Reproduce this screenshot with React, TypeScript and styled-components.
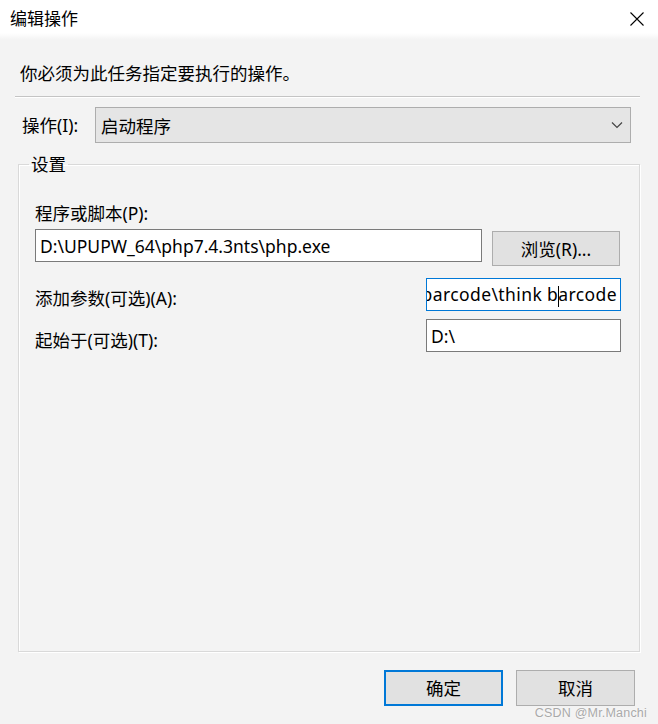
import React from "react";
import styled, { createGlobalStyle } from "styled-components";

const GlobalStyle = createGlobalStyle`
  html, body { margin: 0; padding: 0; background: #f3f3f3; }
  body { font-family: "Noto Sans", "Noto Sans CJK SC", sans-serif; color: #000; }
  * { box-sizing: border-box; }
`;

const Window = styled.div`
  width: 658px;
  height: 724px;
  position: relative;
  display: flex;
  flex-direction: column;
  background: #f3f3f3;
  font-size: 17.5px;
  overflow: hidden;
`;

const TitleBar = styled.div`
  height: 40px;
  flex: none;
  background: linear-gradient(#ffffff 0, #ffffff 33px, #f3f3f3 40px);
  display: flex;
  align-items: center;
  justify-content: space-between;
  padding: 0 14px 0 10px;
`;

const Title = styled.span`
  font-size: 17px;
  line-height: 24px;
  margin-top: -2px;
`;

const CloseIcon = styled.svg`
  width: 14px;
  height: 14px;
  margin-top: -2px;
`;

const Body = styled.div`
  flex: 1;
  display: flex;
  flex-direction: column;
  padding: 0 18px 18px 15px;
`;

const Instruction = styled.div`
  margin: 20px 0 0 5px;
  line-height: 26px;
`;

const Separator = styled.div`
  margin-top: 10px;
  height: 2px;
  border-top: 1px solid #c4c4c4;
  border-bottom: 1px solid #ffffff;
`;

const ActionRow = styled.div`
  margin: 9px 9px 0 0;
  height: 36px;
  display: flex;
  align-items: center;
  padding-left: 7px;
`;

const ActionLabel = styled.span`
  width: 73px;
  flex: none;
  line-height: 24px;
`;

const Dropdown = styled.div`
  flex: 1;
  height: 36px;
  background: #e5e5e5;
  border: 1px solid #adadad;
  display: flex;
  align-items: center;
  justify-content: space-between;
  padding: 0 7px 0 5px;
`;

const Chevron = styled.svg`
  width: 12px;
  height: 8px;
`;

const Group = styled.fieldset`
  margin: 9px 0 0 3px;
  height: 500px;
  flex: none;
  border: 1px solid #d9d9d9;
  box-shadow: inset 1px 1px 0 #ffffff, 1px 1px 0 #ffffff;
  padding: 25px 18px 0 16px;
  min-width: 0;
`;

const Legend = styled.legend`
  margin-left: -6px;
  padding: 0 2px;
  line-height: 24px;
`;

const FieldLabel = styled.div<{ $pad?: number }>`
  line-height: 24px;
  padding-top: ${(p) => p.$pad ?? 0}px;
`;

const ProgramRow = styled.div`
  margin-top: 4px;
  display: flex;
  align-items: flex-start;
  gap: 10px;
`;

const TextBox = styled.div<{ $w: number; $focus?: boolean; $right?: boolean }>`
  width: ${(p) => p.$w}px;
  height: 33px;
  flex: none;
  background: #ffffff;
  border: 1px solid ${(p) => (p.$focus ? "#0078d7" : "#7a7a7a")};
  display: flex;
  align-items: center;
  justify-content: ${(p) => (p.$right ? "flex-end" : "flex-start")};
  padding: 0 3px 0 4px;
  overflow: hidden;
  white-space: nowrap;
  line-height: 24px;
`;

const ScrolledText = styled.span`
  flex: none;
  letter-spacing: 0.4px;
`;

const Caret = styled.span`
  display: inline-block;
  width: 1px;
  height: 21px;
  background: #000;
  vertical-align: middle;
  margin: 0 -1px 0 0;
`;

const Button = styled.div<{ $default?: boolean; $w: number; $h: number }>`
  width: ${(p) => p.$w}px;
  height: ${(p) => p.$h}px;
  flex: none;
  background: #e1e1e1;
  border: ${(p) => (p.$default ? "2px solid #0078d7" : "1px solid #adadad")};
  display: flex;
  align-items: center;
  justify-content: center;
  line-height: 24px;
`;

const BrowseButton = styled(Button)`
  margin-top: 2px;
`;

const FieldRow = styled.div<{ $mt: number }>`
  margin-top: ${(p) => p.$mt}px;
  display: flex;
  justify-content: space-between;
  align-items: flex-start;
`;

const ButtonRow = styled.div`
  margin: 18px 5px 0 0;
  display: flex;
  justify-content: flex-end;
  gap: 13px;
`;

const Watermark = styled.div`
  position: absolute;
  right: 11px;
  bottom: 4px;
  font-family: "Liberation Sans", sans-serif;
  font-size: 12.5px;
  color: #a9a9a9;
  text-shadow: 0 0 2px #fff;
  letter-spacing: 0.2px;
`;

export default function App() {
  return (
    <Window>
      <GlobalStyle />
      <TitleBar>
        <Title>编辑操作</Title>
        <CloseIcon viewBox="0 0 14 14">
          <path d="M0.5 0.5 L13.5 13.5 M13.5 0.5 L0.5 13.5" stroke="#000" strokeWidth="1.1" fill="none" />
        </CloseIcon>
      </TitleBar>
      <Body>
        <Instruction>你必须为此任务指定要执行的操作。</Instruction>
        <Separator />
        <ActionRow>
          <ActionLabel>操作(I):</ActionLabel>
          <Dropdown>
            <span>启动程序</span>
            <Chevron viewBox="0 0 12 8">
              <path d="M1 1.5 L6 6.5 L11 1.5" stroke="#444" strokeWidth="1.2" fill="none" />
            </Chevron>
          </Dropdown>
        </ActionRow>
        <Group>
          <Legend>设置</Legend>
          <FieldLabel>程序或脚本(P):</FieldLabel>
          <ProgramRow>
            <TextBox $w={447}>D:\UPUPW_64\php7.4.3nts\php.exe</TextBox>
            <BrowseButton $w={128} $h={35}>浏览(R)...</BrowseButton>
          </ProgramRow>
          <FieldRow $mt={12}>
            <FieldLabel $pad={8}>添加参数(可选)(A):</FieldLabel>
            <TextBox $w={195} $focus $right>
              <ScrolledText>
                D:\www\barcode\think b<Caret />arcode
              </ScrolledText>
            </TextBox>
          </FieldRow>
          <FieldRow $mt={8}>
            <FieldLabel $pad={9}>起始于(可选)(T):</FieldLabel>
            <TextBox $w={195}>D:\</TextBox>
          </FieldRow>
        </Group>
        <ButtonRow>
          <Button $default $w={119} $h={36}>确定</Button>
          <Button $w={119} $h={36}>取消</Button>
        </ButtonRow>
      </Body>
      <Watermark>CSDN @Mr.Manchi</Watermark>
    </Window>
  );
}
